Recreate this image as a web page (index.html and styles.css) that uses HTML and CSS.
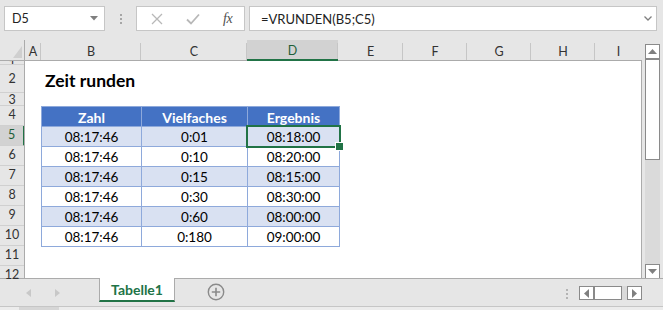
FILE: index.html
```html
<!DOCTYPE html>
<html lang="de">
<head>
<meta charset="utf-8">
<title>Zeit runden</title>
<link rel="stylesheet" href="styles.css">
</head>
<body>
<div class="app">
  <div class="fbar">
    <div class="namebox">
      <span class="nb-text">D5</span>
      <svg class="nb-dd" width="8" height="5" viewBox="0 0 8 5"><path d="M0 0H8L4 4.5Z" fill="#7f7f7f"/></svg>
    </div>
    <div class="grip"><i></i><i></i><i></i></div>
    <div class="btns">
      <svg class="ico" width="12" height="12" viewBox="0 0 12 12"><path d="M1 1L11 11M11 1L1 11" stroke="#b8b8b8" stroke-width="1.3" fill="none"/></svg>
      <svg class="ico" width="14" height="12" viewBox="0 0 14 12"><path d="M1 6.5L5 10.5L13 1.5" stroke="#b8b8b8" stroke-width="1.8" fill="none"/></svg>
      <span class="fx">fx</span>
    </div>
    <div class="formula">
      <span class="f-text">=VRUNDEN(B5;C5)</span>
      <svg class="f-chev" width="8" height="5" viewBox="0 0 8 5"><path d="M0.5 0.5L4 4L7.5 0.5" stroke="#7f7f7f" stroke-width="1.3" fill="none"/></svg>
    </div>
  </div>

  <div class="main">
    <div class="sheet">
      <div class="corner"><svg width="10" height="13" viewBox="0 0 10 13"><path d="M9 0V12H0Z" fill="#cfcfcf"/></svg></div>
      <div class="colheads">
        <div class="ch w-a">A</div>
        <div class="ch w-b">B</div>
        <div class="ch w-c">C</div>
        <div class="ch w-d sel">D</div>
        <div class="ch w-e">E</div>
        <div class="ch w-f">F</div>
        <div class="ch w-g">G</div>
        <div class="ch w-h">H</div>
        <div class="ch w-i">I</div>
      </div>
      <div class="rowheads">
        <div class="rh r-1"><span>1</span></div>
        <div class="rh r-2"><span>2</span></div>
        <div class="rh r-3"><span>3</span></div>
        <div class="rh"><span>4</span></div>
        <div class="rh sel"><span>5</span></div>
        <div class="rh"><span>6</span></div>
        <div class="rh"><span>7</span></div>
        <div class="rh"><span>8</span></div>
        <div class="rh"><span>9</span></div>
        <div class="rh"><span>10</span></div>
        <div class="rh"><span>11</span></div>
        <div class="rh"><span>12</span></div>
      </div>
      <div class="canvas">
        <div class="title">Zeit runden</div>
        <table class="data">
          <colgroup><col class="c-b"><col class="c-c"><col class="c-d"></colgroup>
          <thead>
            <tr><th>Zahl</th><th>Vielfaches</th><th>Ergebnis</th></tr>
          </thead>
          <tbody>
            <tr class="band"><td>08:17:46</td><td>0:01</td><td class="cur">08:18:00</td></tr>
            <tr><td>08:17:46</td><td>0:10</td><td>08:20:00</td></tr>
            <tr class="band"><td>08:17:46</td><td>0:15</td><td>08:15:00</td></tr>
            <tr><td>08:17:46</td><td>0:30</td><td>08:30:00</td></tr>
            <tr class="band"><td>08:17:46</td><td>0:60</td><td>08:00:00</td></tr>
            <tr><td>08:17:46</td><td>0:180</td><td>09:00:00</td></tr>
          </tbody>
        </table>
      </div>
    </div>
    <div class="vscroll">
      <div class="vbtn"><svg width="9" height="5" viewBox="0 0 9 5"><path d="M0 5H9L4.5 0Z" fill="#7f7f7f"/></svg></div>
      <div class="vthumb"></div>
      <div class="vtrack"></div>
      <div class="vbtn"><svg width="9" height="5" viewBox="0 0 9 5"><path d="M0 0H9L4.5 5Z" fill="#7f7f7f"/></svg></div>
    </div>
  </div>

  <div class="tabbar">
    <div class="tabnav">
      <svg width="5" height="8" viewBox="0 0 5 8"><path d="M5 0V8L0 4Z" fill="#c8c8c8"/></svg>
      <svg width="5" height="8" viewBox="0 0 5 8"><path d="M0 0V8L5 4Z" fill="#c8c8c8"/></svg>
    </div>
    <div class="tab">Tabelle1</div>
    <div class="addsheet">
      <svg width="18" height="18" viewBox="0 0 18 18"><circle cx="9" cy="9" r="7.7" fill="none" stroke="#8a8a8a" stroke-width="1.4"/><path d="M9 4.8V13.2M4.8 9H13.2" stroke="#8a8a8a" stroke-width="1.6"/></svg>
    </div>
    <div class="spacer"></div>
    <div class="grip grip-h"><i></i><i></i><i></i></div>
    <div class="hscroll">
      <div class="hbtn"><svg width="5" height="9" viewBox="0 0 5 9"><path d="M5 0V9L0 4.5Z" fill="#7f7f7f"/></svg></div>
      <div class="hthumb"></div>
      <div class="htrack"></div>
      <div class="hbtn"><svg width="5" height="9" viewBox="0 0 5 9"><path d="M0 0V9L5 4.5Z" fill="#7f7f7f"/></svg></div>
    </div>
  </div>
  <div class="status"><div class="status-thumb"></div></div>
</div>
</body>
</html>
```

FILE: styles.css
```css
* { box-sizing: border-box; }
html, body { margin: 0; padding: 0; }
body { background: #e6e6e6; font-family: Lato, "Liberation Sans", sans-serif; }

.app {
  width: 663px;
  height: 310px;
  background: #e6e6e6;
  display: flex;
  flex-direction: column;
  overflow: hidden;
}

/* formula bar */
.fbar {
  height: 40px;
  display: flex;
  align-items: flex-start;
  padding: 6px 0 0 4px;
}
.namebox {
  width: 101px;
  height: 25px;
  background: #fff;
  border: 1px solid #c6c6c6;
  display: flex;
  align-items: center;
  padding: 0 6px 0 7px;
}
.nb-text { font-size: 12.5px; color: #222; flex: 1; }
.nb-dd { display: block; }
.grip {
  width: 31px;
  height: 25px;
  display: flex;
  flex-direction: column;
  align-items: center;
  justify-content: center;
  gap: 2px;
}
.grip i { display: block; width: 2px; height: 2px; background: #a6a6a6; }
.btns {
  width: 109px;
  height: 25px;
  background: #fff;
  border: 1px solid #c6c6c6;
  display: flex;
  align-items: center;
  padding: 0 0 0 14px;
}
.btns .ico { display: block; }
.btns .ico:first-child { margin-right: 23px; }
.btns .ico:nth-child(2) { margin-right: 23px; }
.fx {
  font-family: "Liberation Serif", "DejaVu Serif", serif;
  font-style: italic;
  font-size: 14px;
  color: #505050;
  letter-spacing: -0.5px;
}
.formula {
  margin-left: 4px;
  width: 408px;
  height: 25px;
  background: #fff;
  border: 1px solid #c6c6c6;
  display: flex;
  align-items: center;
  padding: 0 4px 0 11px;
}
.f-text { flex: 1; font-size: 13px; color: #222; }
.f-chev { display: block; }

/* main area */
.main {
  height: 239px;
  display: flex;
}
.sheet {
  width: 642px;
  height: 239px;
  display: grid;
  grid-template-columns: 25px 617px;
  grid-template-rows: 21px 218px;
  overflow: hidden;
}
.corner {
  background: #e6e6e6;
  border-right: 1px solid #ababab;
  border-bottom: 1px solid #ababab;
  display: flex;
  justify-content: flex-end;
  align-items: flex-end;
  padding: 0 1px 1px 0;
}
.corner svg { display: block; }

.colheads {
  display: flex;
  background: #e6e6e6;
  border-bottom: 1px solid #ababab;
}
.ch {
  position: relative;
  height: 20px;
  display: flex;
  align-items: center;
  justify-content: center;
  font-size: 12.5px;
  color: #333;
  padding-top: 2px;
}
.ch::after {
  content: "";
  position: absolute;
  right: 0;
  top: 3px;
  bottom: 0;
  width: 1px;
  background: #c6c6c6;
}
.ch.sel {
  background: #d2d2d2;
  color: #1d5e38;
  border-bottom: 2px solid #217346;
  height: 21px;
  padding-top: 1px;
}
.w-a { width: 16px; }
.w-b { width: 100px; }
.w-c { width: 106px; }
.w-d { width: 91px; }
.w-e { width: 65px; }
.w-f { width: 64px; }
.w-g { width: 64px; }
.w-h { width: 64px; }
.w-i { width: 47px; }
.w-i::after { display: none; }

.rowheads {
  display: flex;
  flex-direction: column;
  background: #e6e6e6;
  border-right: 1px solid #ababab;
  overflow: hidden;
}
.rh {
  flex: none;
  position: relative;
  height: 20px;
  font-size: 12.5px;
  line-height: 16px;
  color: #333;
  border-bottom: 1px solid #d0d0d0;
  overflow: hidden;
}
.rh span {
  position: absolute;
  left: 0;
  right: 0;
  bottom: 2px;
  text-align: center;
}
.rh.r-1 { height: 4px; }
.rh.r-1 span { bottom: -8px; }
.rh.r-2 { height: 28px; }
.rh.r-2 span { bottom: 5px; }
.rh.r-3 { height: 13px; }
.rh.r-3 span { bottom: -3px; }
.rh.sel {
  background: #d2d2d2;
  color: #1d5e38;
  border-right: 2px solid #217346;
  margin-right: -1px;
}

.canvas {
  background: #fff;
  border-right: 1px solid #ababab;
  display: grid;
  grid-template-columns: 16px 100px 106px 91px 65px 64px 64px 64px 46px;
  grid-template-rows: 4px 28px 13px repeat(9, 20px);
  overflow: hidden;
}
.title {
  grid-column: 2 / 6;
  grid-row: 2;
  align-self: end;
  padding: 0 0 1px 4px;
  font-weight: 700;
  font-size: 17.5px;
  line-height: 22px;
  color: #000;
}
.data {
  grid-column: 2 / 5;
  grid-row: 4 / 11;
  align-self: start;
  width: 298px;
  border-collapse: collapse;
  table-layout: fixed;
  font-size: 13.5px;
  color: #000;
}
.c-b { width: 100px; }
.c-c { width: 106px; }
.c-d { width: 92px; }
.data th, .data td {
  height: 20px;
  padding: 1px 0 0 0;
  text-align: center;
  border: 1px solid #8ea9db;
  line-height: 17px;
  white-space: nowrap;
}
.data th {
  background: #4472c4;
  color: #fff;
  font-weight: 700;
  font-size: 14px;
}
.data tr.band td { background: #d9e1f2; }
.data td.cur { position: relative; }
.data td.cur::before {
  content: "";
  position: absolute;
  left: -2px;
  top: -2px;
  right: -2px;
  bottom: -2px;
  border: 2px solid #217346;
}
.data td.cur::after {
  content: "";
  position: absolute;
  right: -5px;
  bottom: -5px;
  width: 7px;
  height: 7px;
  background: #217346;
  border: 1px solid #fff;
}

/* vertical scrollbar */
.vscroll {
  width: 15px;
  margin: 4px 0 0 3px;
  display: flex;
  flex-direction: column;
}
.vbtn {
  height: 15px;
  background: #fff;
  border: 1px solid #8a8a8a;
  display: flex;
  align-items: center;
  justify-content: center;
}
.vbtn svg { display: block; }
.vthumb {
  height: 102px;
  background: #fff;
  border: 1px solid #8a8a8a;
  border-top: 2px solid #8a8a8a;
  margin-top: -1px;
}
.vtrack { flex: 1; background: #dadada; }

/* tabs */
.tabbar {
  height: 28px;
  display: flex;
  align-items: flex-start;
  border-top: 1px solid #ababab;
  margin-top: -1px;
}
.tabnav {
  width: 99px;
  height: 27px;
  display: flex;
  align-items: center;
  padding-left: 26px;
  gap: 24px;
}
.tabnav svg { display: block; }
.tab {
  width: 76px;
  height: 24px;
  margin-top: -1px;
  background: #fff;
  border-left: 1px solid #ababab;
  border-right: 1px solid #ababab;
  border-bottom: 2px solid #217346;
  display: flex;
  align-items: center;
  justify-content: center;
  font-weight: 700;
  font-size: 14px;
  color: #217346;
  padding-top: 1px;
}
.addsheet {
  width: 82px;
  height: 27px;
  display: flex;
  align-items: center;
  justify-content: center;
  padding-bottom: 1px;
}
.addsheet svg { display: block; }
.spacer { flex: 1; }
.grip-h {
  width: 10px;
  height: 27px;
  margin-right: 7px;
  padding-top: 2px;
}
.grip-h i { background: #b4b4b4; width: 2px; height: 2px; }
.hscroll {
  margin-top: 7px;
  margin-right: 21px;
  height: 14px;
  display: flex;
}
.hbtn {
  width: 15px;
  height: 14px;
  background: #fff;
  border: 1px solid #8a8a8a;
  display: flex;
  align-items: center;
  justify-content: center;
}
.hbtn svg { display: block; }
.hthumb {
  width: 29px;
  height: 14px;
  background: #fff;
  border: 1px solid #8a8a8a;
  border-left: 2px solid #8a8a8a;
  margin-left: -1px;
}
.htrack { width: 5px; background: #dadada; }

.status {
  flex: 1;
  background: #ececec;
  border-top: 1px solid #c6c6c6;
  position: relative;
}
.status-thumb {
  position: absolute;
  left: 19px;
  top: 0;
  width: 40px;
  height: 3px;
  background: #d6d6d6;
}
```
